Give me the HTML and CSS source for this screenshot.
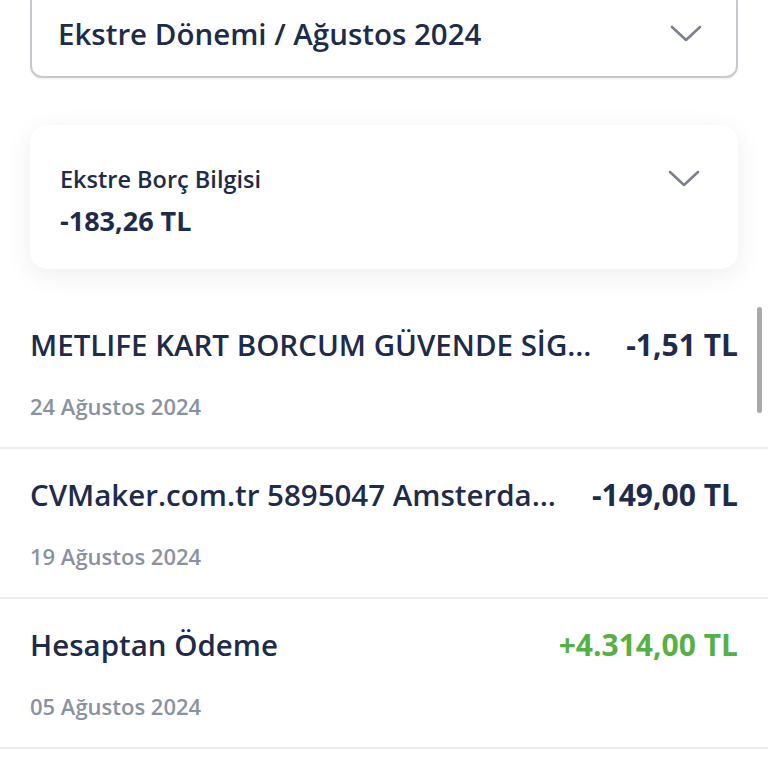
FILE: index.html
```html
<!DOCTYPE html>
<html lang="tr">
<head>
<meta charset="utf-8">
<title>Ekstre</title>
<link rel="stylesheet" href="styles.css">
</head>
<body>
<div class="page">
  <div class="top">
    <div class="select">
      <span class="select-text">Ekstre Dönemi / Ağustos 2024</span>
      <svg class="chev" width="32" height="18" viewBox="0 0 32 18"><path d="M2 2 L16 15 L30 2" fill="none" stroke="#7b808b" stroke-width="2.6" stroke-linecap="round" stroke-linejoin="round"/></svg>
    </div>
    <div class="card">
      <div class="card-body">
        <div class="card-label">Ekstre Borç Bilgisi</div>
        <div class="card-amount">-183,26 TL</div>
      </div>
      <svg class="chev card-chev" width="32" height="18" viewBox="0 0 32 18"><path d="M2 2 L16 15 L30 2" fill="none" stroke="#7b808b" stroke-width="2.6" stroke-linecap="round" stroke-linejoin="round"/></svg>
    </div>
  </div>
  <div class="list">
    <div class="row">
      <div class="row-main">
        <span class="row-title">METLIFE KART BORCUM GÜVENDE SİGORTA PRİMİ</span>
        <span class="row-amount">-1,51 TL</span>
      </div>
      <div class="row-date">24 Ağustos 2024</div>
    </div>
    <div class="row">
      <div class="row-main">
        <span class="row-title">CVMaker.com.tr 5895047 Amsterdam NL</span>
        <span class="row-amount">-149,00 TL</span>
      </div>
      <div class="row-date">19 Ağustos 2024</div>
    </div>
    <div class="row">
      <div class="row-main">
        <span class="row-title">Hesaptan Ödeme</span>
        <span class="row-amount positive">+4.314,00 TL</span>
      </div>
      <div class="row-date">05 Ağustos 2024</div>
    </div>
    <div class="scrollbar"></div>
  </div>
</div>
</body>
</html>
```

FILE: styles.css
```css
html, body {
  margin: 0;
  padding: 0;
  background: #ffffff;
  overflow: hidden;
}
body {
  font-family: "Open Sans", "Noto Sans", sans-serif;
  color: #1e2b4a;
}
.page {
  width: 768px;
  height: 768px;
  overflow: hidden;
  position: relative;
}
.top {
  padding: 0 30px;
}
.select {
  margin-top: -10px;
  border: 2.5px solid #c6c8cd;
  border-radius: 12px;
  padding: 22px 34px 22px 26px;
  display: flex;
  align-items: center;
  justify-content: space-between;
  box-shadow: 0 2px 2px rgba(0,0,0,0.04);
}
.select-text {
  font-size: 29.5px;
  line-height: 40px;
  font-weight: 600;
}
.chev {
  display: block;
}
.card {
  margin-top: 47px;
  background: #ffffff;
  border-radius: 18px;
  box-shadow: 0 6px 28px rgba(0,0,0,0.07);
  padding: 38px 38px 31px 30px;
  display: flex;
  justify-content: space-between;
  align-items: flex-start;
}
.card-label {
  font-size: 23.5px;
  line-height: 32px;
  font-weight: 600;
}
.card-amount {
  margin-top: 9px;
  font-size: 27px;
  line-height: 34px;
  font-weight: 700;
}
.card-chev {
  margin-top: 7px;
}
.list {
  position: relative;
  margin-top: 30px;
  background: #ffffff;
}
.row {
  padding: 26px 30px 26px 30px;
  border-bottom: 2px solid #ededed;
}
.row-main {
  display: flex;
  align-items: center;
  gap: 34px;
}
.row-title {
  flex: 1;
  min-width: 0;
  white-space: nowrap;
  overflow: hidden;
  text-overflow: ellipsis;
  font-size: 29.5px;
  line-height: 40px;
  font-weight: 600;
}
.row-amount {
  flex: none;
  font-size: 30px;
  line-height: 40px;
  font-weight: 700;
}
.row-amount.positive {
  color: #55b146;
}
.row-date {
  margin-top: 26px;
  font-size: 22px;
  line-height: 30px;
  font-weight: 600;
  color: #8a92a2;
}
.scrollbar {
  position: absolute;
  left: 757px;
  top: 8px;
  width: 5px;
  height: 106px;
  border-radius: 3px;
  background: #a9a9a9;
}
```
